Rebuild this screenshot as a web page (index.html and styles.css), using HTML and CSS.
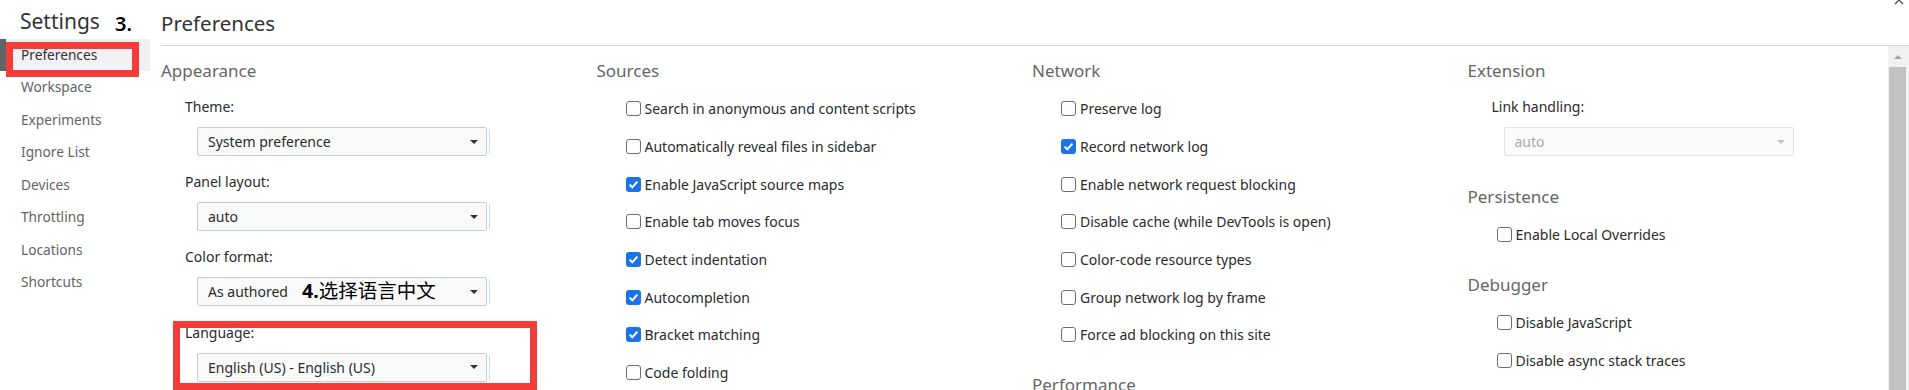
FILE: index.html
```html
<!DOCTYPE html>
<html lang="en">
<head>
    <meta charset="UTF-8">
    <meta name="viewport" content="width=device-width, initial-scale=1.0">
    <title>Settings - Preferences</title>
    <link rel="stylesheet" href="styles.css">
</head>
<body>
    <div class="settings">
        <aside class="sidebar">
            <h1 class="sidebar-title">Settings</h1>
            <nav class="tabs">
                <div class="tab active">Preferences</div>
                <div class="tab">Workspace</div>
                <div class="tab">Experiments</div>
                <div class="tab">Ignore List</div>
                <div class="tab">Devices</div>
                <div class="tab">Throttling</div>
                <div class="tab">Locations</div>
                <div class="tab">Shortcuts</div>
            </nav>
        </aside>

        <main class="panel">
            <header class="panel-header">
                <h2>Preferences</h2>
            </header>

            <div class="panel-body">
                <div class="columns">
                    <div class="column">
                        <section class="section">
                            <h3 class="section-title">Appearance</h3>
                            <div class="field">
                                <div class="field-label">Theme:</div>
                                <div class="select"><span>System preference</span><i class="arrow"></i></div>
                            </div>
                            <div class="field">
                                <div class="field-label">Panel layout:</div>
                                <div class="select"><span>auto</span><i class="arrow"></i></div>
                            </div>
                            <div class="field">
                                <div class="field-label">Color format:</div>
                                <div class="select"><span>As authored</span><i class="arrow"></i></div>
                            </div>
                            <div class="field">
                                <div class="field-label">Language:</div>
                                <div class="select"><span>English (US) - English (US)</span><i class="arrow"></i></div>
                            </div>
                        </section>
                    </div>

                    <div class="column">
                        <section class="section">
                            <h3 class="section-title">Sources</h3>
                            <label class="check"><span class="box"></span>Search in anonymous and content scripts</label>
                            <label class="check"><span class="box"></span>Automatically reveal files in sidebar</label>
                            <label class="check"><span class="box checked"></span>Enable JavaScript source maps</label>
                            <label class="check"><span class="box"></span>Enable tab moves focus</label>
                            <label class="check"><span class="box checked"></span>Detect indentation</label>
                            <label class="check"><span class="box checked"></span>Autocompletion</label>
                            <label class="check"><span class="box checked"></span>Bracket matching</label>
                            <label class="check"><span class="box"></span>Code folding</label>
                        </section>
                    </div>

                    <div class="column">
                        <section class="section">
                            <h3 class="section-title">Network</h3>
                            <label class="check"><span class="box"></span>Preserve log</label>
                            <label class="check"><span class="box checked"></span>Record network log</label>
                            <label class="check"><span class="box"></span>Enable network request blocking</label>
                            <label class="check"><span class="box"></span>Disable cache (while DevTools is open)</label>
                            <label class="check"><span class="box"></span>Color-code resource types</label>
                            <label class="check"><span class="box"></span>Group network log by frame</label>
                            <label class="check"><span class="box"></span>Force ad blocking on this site</label>
                        </section>
                        <section class="section">
                            <h3 class="section-title">Performance</h3>
                        </section>
                    </div>

                    <div class="column">
                        <section class="section">
                            <h3 class="section-title">Extension</h3>
                            <div class="field">
                                <div class="field-label">Link handling:</div>
                                <div class="select disabled"><span>auto</span><i class="arrow"></i></div>
                            </div>
                        </section>
                        <section class="section">
                            <h3 class="section-title">Persistence</h3>
                            <label class="check"><span class="box"></span>Enable Local Overrides</label>
                        </section>
                        <section class="section">
                            <h3 class="section-title">Debugger</h3>
                            <label class="check"><span class="box"></span>Disable JavaScript</label>
                            <label class="check"><span class="box"></span>Disable async stack traces</label>
                        </section>
                    </div>
                </div>

                <div class="scrollbar">
                    <div class="scroll-arrow"><i></i></div>
                    <div class="scroll-thumb"></div>
                </div>
            </div>
        </main>
    </div>

    <!-- close button, mostly off screen -->
    <svg class="close" width="10" height="10" viewBox="0 0 10 10">
        <path d="M1 1 L9 9 M9 1 L1 9" stroke="#555" stroke-width="1.4" fill="none"/>
    </svg>

    <!-- tutorial annotations drawn over the screenshot -->
    <div class="note note-3">3.</div>
    <div class="note note-4"><b>4.</b>选择语言中文</div>
    <div class="mark mark-tab"></div>
    <div class="mark mark-lang"></div>
</body>
</html>
```

FILE: styles.css
```css
* {
    margin: 0;
    padding: 0;
    box-sizing: border-box;
}

body {
    font-family: "Noto Sans", "Open Sans", sans-serif;
    color: #2b2b2b;
    background: #fff;
    height: 390px;
    overflow: hidden;
    position: relative;
}

.settings {
    display: flex;
    height: 390px;
}

/* sidebar */

.sidebar {
    width: 150px;
    flex-shrink: 0;
}

.sidebar-title {
    font-size: 21px;
    font-weight: 400;
    height: 39px;
    line-height: 37px;
    padding: 3px 0 0 20px;
    color: #333;
}

.tab {
    height: 32.45px;
    line-height: 32px;
    padding-left: 21px;
    font-size: 13.7px;
    color: #5f6368;
}

.tab.active {
    background: #f1f1f3;
    color: #333;
    box-shadow: inset 6px 0 0 #636363;
}

/* main panel */

.panel {
    flex: 1;
    min-width: 0;
    margin-left: 11px;
    display: flex;
    flex-direction: column;
}

.panel-header {
    height: 46px;
    border-bottom: 1px solid #d3d3d3;
    display: flex;
    align-items: center;
}

.panel-header h2 {
    font-size: 20.5px;
    font-weight: 400;
    color: #333;
}

.panel-body {
    flex: 1;
    min-height: 0;
    display: flex;
}

.columns {
    flex: 1;
    display: grid;
    grid-template-columns: repeat(3, 435.5px) 1fr;
    align-items: start;
    padding-top: 12px;
}

.section + .section {
    margin-top: 18.5px;
}

.section-title {
    font-size: 17px;
    font-weight: 400;
    line-height: 26px;
    color: #666;
    margin-bottom: 6px;
}

.field {
    padding: 7px 0 9.2px 24px;
}

.field-label {
    font-size: 14px;
    line-height: 20px;
}

.select {
    position: relative;
    width: 290px;
    height: 29px;
    margin: 10px 0 0 12px;
    padding: 0 8px 0 10px;
    border: 1px solid #c9cbce;
    border-radius: 2px;
    background: #f8f9f9;
    display: flex;
    align-items: center;
    justify-content: space-between;
    font-size: 14px;
}

.select::after {
    content: "";
    position: absolute;
    right: -4px;
    top: 1px;
    bottom: 1px;
    width: 1px;
    background: #c9dcf4;
}

.arrow {
    border-left: 4px solid transparent;
    border-right: 4px solid transparent;
    border-top: 4px solid #333;
}

.select.disabled {
    background: #fafafa;
    border-color: #e3e3e3;
    color: #a9a9a9;
}

.select.disabled::after {
    display: none;
}

.select.disabled .arrow {
    border-top-color: #c4c4c4;
}

.check {
    height: 37.7px;
    display: flex;
    align-items: center;
    gap: 4px;
    padding-left: 29px;
    font-size: 14px;
}

.box {
    width: 15px;
    height: 15px;
    border: 1.5px solid #6f6f6f;
    border-radius: 3px;
    flex-shrink: 0;
    background: #fff;
}

.box.checked {
    border: none;
    background: #1a73e8 url("data:image/svg+xml,%3Csvg xmlns='http://www.w3.org/2000/svg' width='15' height='15'%3E%3Cpath d='M3.6 7.6 L6.3 10.3 L11.4 4.6' stroke='white' stroke-width='2' fill='none'/%3E%3C/svg%3E") no-repeat center;
}

/* scrollbar */

.scrollbar {
    width: 21px;
    flex-shrink: 0;
    background: #f1f1f1;
    display: flex;
    flex-direction: column;
}

.scroll-arrow {
    width: 19px;
    height: 21px;
    display: flex;
    align-items: center;
    justify-content: center;
}

.scroll-arrow i {
    border-left: 4px solid transparent;
    border-right: 4px solid transparent;
    border-bottom: 4px solid #a3a3a3;
}

.scroll-thumb {
    flex: 1;
    width: 17px;
    margin-left: 1px;
    background: #c1c1c1;
}

.close {
    position: absolute;
    top: -5px;
    left: 1894px;
}

/* annotations */

.note {
    position: absolute;
    color: #000;
    font-family: "Noto Sans", "Noto Sans CJK SC", sans-serif;
}

.note-3 {
    left: 115px;
    top: 10px;
    font-size: 20px;
    font-weight: 600;
    line-height: 28px;
}

.note-4 {
    left: 302px;
    top: 276px;
    font-size: 19.5px;
    line-height: 28px;
    font-family: "Noto Sans CJK SC", sans-serif;
}

.note-4 b {
    font-family: "Noto Sans", sans-serif;
    font-weight: 700;
}

.mark {
    position: absolute;
    border: 7px solid #f63b3b;
}

.mark-tab {
    left: 6px;
    top: 42px;
    width: 133px;
    height: 35px;
}

.mark-lang {
    left: 173px;
    top: 321px;
    width: 364px;
    height: 69px;
}
```
